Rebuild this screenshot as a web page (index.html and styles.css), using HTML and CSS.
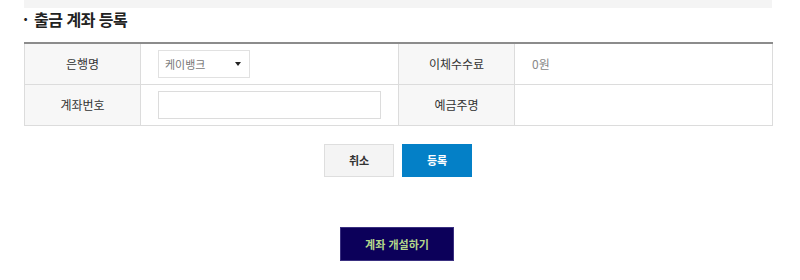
FILE: index.html
```html
<!DOCTYPE html>
<html lang="ko">
<head>
<meta charset="utf-8">
<link rel="stylesheet" href="styles.css">
</head>
<body>
<div class="wrap">
  <div class="topbar"></div>
  <h2 class="title"><span class="dot">·</span>출금 계좌 등록</h2>
  <table class="form">
    <colgroup>
      <col class="c1"><col class="c2"><col class="c3"><col class="c4">
    </colgroup>
    <tr>
      <th>은행명</th>
      <td><div class="select"><span>케이뱅크</span><span class="arrow"></span></div></td>
      <th>이체수수료</th>
      <td class="muted">0원</td>
    </tr>
    <tr>
      <th>계좌번호</th>
      <td><div class="input"></div></td>
      <th>예금주명</th>
      <td></td>
    </tr>
  </table>
  <div class="btns">
    <button class="btn cancel">취소</button>
    <button class="btn ok">등록</button>
  </div>
  <div class="open-row">
    <button class="btn open">계좌 개설하기</button>
  </div>
</div>
</body>
</html>
```
FILE: styles.css
```css
html, body {
  margin: 0;
  padding: 0;
  background: #fff;
  font-family: "Noto Sans CJK KR", "Noto Sans", sans-serif;
  color: #333;
}
.wrap {
  width: 748px;
  margin-left: 24px;
}
.topbar {
  height: 8px;
  background: #f4f4f4;
}
.title {
  margin: 0;
  height: 34px;
  box-sizing: border-box;
  padding-top: 1px;
  font-size: 16px;
  line-height: 20px;
  font-weight: bold;
  color: #222;
  letter-spacing: -0.5px;
}
.dot {
  display: inline-block;
  width: 11px;
  margin-left: -1px;
  font-weight: bold;
}
.form {
  width: 748px;
  border-collapse: collapse;
  border-top: 2px solid #8c8c8c;
  font-size: 12px;
  table-layout: fixed;
}
.c1 { width: 116px; }
.c2 { width: 258px; }
.c3 { width: 116px; }
.c4 { width: 258px; }
.form th, .form td {
  height: 41px;
  border-bottom: 1px solid #dcdcdc;
  border-left: 1px solid #dcdcdc;
  padding: 0;
  box-sizing: border-box;
}
.form td:last-child { border-right: 1px solid #dcdcdc; }
.form th {
  background: #f7f7f7;
  font-weight: normal;
  color: #333;
  text-align: center;
}
.form td {
  padding-left: 17px;
  color: #333;
}
.form td.muted { color: #888; }
.select {
  width: 92px;
  height: 28px;
  box-sizing: border-box;
  border: 1px solid #e1e1e1;
  display: flex;
  align-items: center;
  justify-content: space-between;
  padding: 0 8px 0 6px;
  color: #777;
  font-size: 11px;
}
.arrow {
  width: 0;
  height: 0;
  border-left: 3px solid transparent;
  border-right: 3px solid transparent;
  border-top: 4px solid #222;
}
.input {
  width: 223px;
  height: 28px;
  box-sizing: border-box;
  border: 1px solid #dcdcdc;
}
.btns {
  display: flex;
  justify-content: center;
  gap: 8px;
  margin-top: 18px;
}
.btn {
  font-family: inherit;
  font-size: 11px;
  font-weight: bold;
  border: 1px solid transparent;
  padding: 0;
  cursor: pointer;
}
.cancel {
  width: 70px;
  height: 33px;
  background: #f4f4f4;
  border-color: #dedede;
  color: #333;
}
.ok {
  width: 70px;
  height: 33px;
  background: #0480c7;
  color: #fff;
}
.open-row {
  display: flex;
  justify-content: center;
  margin-top: 50px;
  padding-right: 2px;
}
.open {
  width: 114px;
  height: 34px;
  background: #0c005a;
  border-color: #3a3080;
  color: #b4d88a;
}
```
